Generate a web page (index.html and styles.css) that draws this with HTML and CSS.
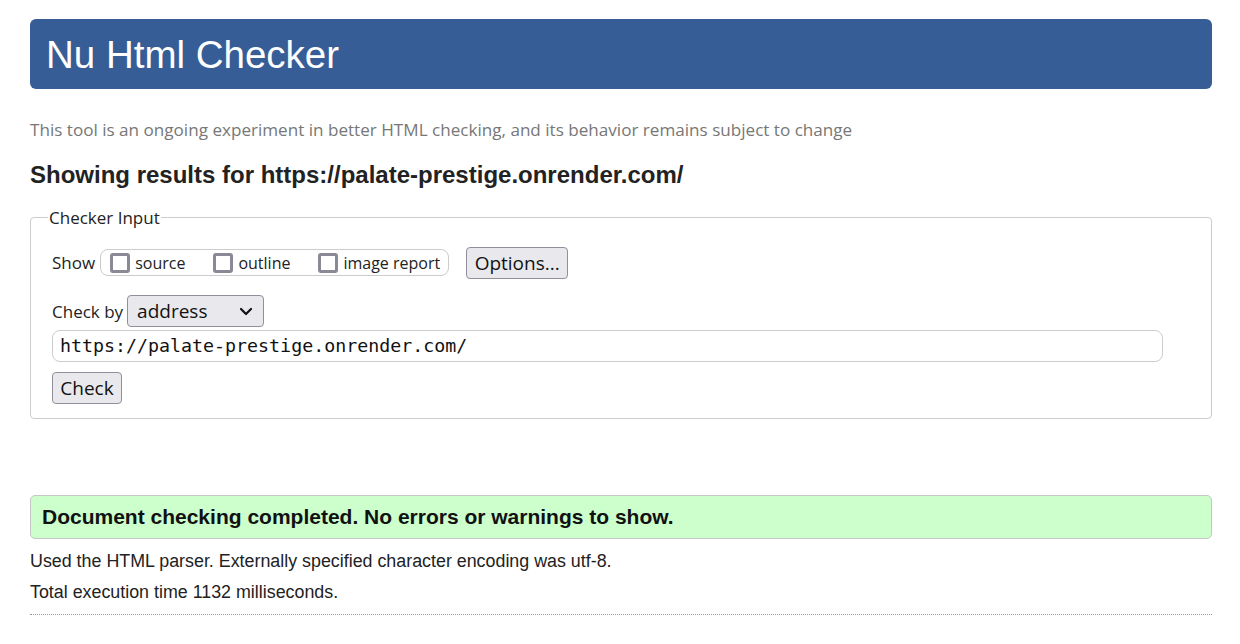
FILE: index.html
```html
<!DOCTYPE html>
<html lang="en">
<head>
<meta charset="utf-8">
<title>Nu Html Checker</title>
<link rel="stylesheet" href="styles.css">
</head>
<body>
<div class="page">
  <h1 class="banner">Nu Html Checker</h1>
  <p class="intro">This tool is an ongoing experiment in better HTML checking, and its behavior remains subject to change</p>
  <h2 class="results-title">Showing results for https://palate-prestige.onrender.com/</h2>
  <fieldset class="checker">
    <legend class="checker-legend">Checker Input</legend>
    <div class="show-row">
      <span class="label">Show</span>
      <span class="show-group">
        <label class="opt"><span class="box"></span>source</label>
        <label class="opt"><span class="box"></span>outline</label>
        <label class="opt"><span class="box"></span>image report</label>
      </span>
      <button class="btn btn-options" type="button">Options...</button>
    </div>
    <div class="by-row">
      <span class="label">Check by</span>
      <span class="select">address<svg class="chev" width="14" height="9" viewBox="0 0 14 9"><path d="M2 2 L7 7 L12 2" fill="none" stroke="#111" stroke-width="2.2" stroke-linecap="round" stroke-linejoin="round"/></svg></span>
    </div>
    <div class="url">https://palate-prestige.onrender.com/</div>
    <button class="btn btn-check" type="button">Check</button>
  </fieldset>
  <div class="success">Document checking completed. No errors or warnings to show.</div>
  <p class="info">Used the HTML parser. Externally specified character encoding was utf-8.</p>
  <p class="info">Total execution time 1132 milliseconds.</p>
  <hr class="sep">
</div>
</body>
</html>
```
FILE: styles.css
```css
html, body {
  margin: 0;
  padding: 0;
  background: #fff;
}
.page {
  margin: 0 28px 0 30px;
  padding-top: 19px;
  font-family: "Liberation Sans", Arial, sans-serif;
  color: #222;
}
.banner {
  margin: 0;
  height: 70px;
  box-sizing: border-box;
  padding: 0 0 0 16px;
  background: #365d96;
  color: #fff;
  border-radius: 6px;
  font-weight: normal;
  font-size: 38.5px;
  line-height: 72px;
}
.intro {
  margin: 29px 0 0 0;
  font-family: "Open Sans", "Noto Sans", sans-serif;
  font-size: 17.1px;
  line-height: 23px;
  color: #777;
}
.results-title {
  margin: 20px 0 0 0;
  font-size: 24px;
  line-height: 28px;
  font-weight: bold;
  color: #222;
}
.checker {
  margin: 17px 0 0 0;
  padding: 18px 20px 14px 21px;
  border: 1px solid #ccc;
  border-radius: 4px;
  font-family: "Open Sans", "Noto Sans", sans-serif;
  font-size: 16px;
  color: #222;
  min-height: 0;
}
.checker-legend {
  padding: 0 1px;
  margin-left: -4px;
  font-size: 17px;
  color: #222;
}
.show-row {
  display: flex;
  align-items: center;
  height: 31px;
}
.label {
  font-size: 17px;
  color: #222;
  margin-right: 5px;
}
.show-group {
  display: inline-flex;
  align-items: center;
  height: 27px;
  box-sizing: border-box;
  border: 1px solid #ccc;
  border-radius: 8px;
  padding: 0 8px 0 9px;
  gap: 28px;
}
.opt {
  display: inline-flex;
  align-items: center;
  font-size: 16px;
  color: #222;
}
.box {
  width: 20px;
  height: 20px;
  box-sizing: border-box;
  border: 3px solid #8a8a96;
  border-radius: 3px;
  margin-right: 5px;
  background: #fff;
}
.btn {
  font-family: "Open Sans", "Noto Sans", sans-serif;
  background: #e9e9ed;
  border: 1px solid #8f8f9d;
  border-radius: 4px;
  color: #111;
  padding: 0;
  box-sizing: border-box;
  height: 32px;
}
.btn-options {
  margin-left: 17px;
  width: 102px;
  font-size: 19px;
}
.by-row {
  display: flex;
  align-items: center;
  margin-top: 17px;
  height: 32px;
}
.select {
  display: inline-flex;
  align-items: center;
  justify-content: space-between;
  width: 137px;
  height: 32px;
  box-sizing: border-box;
  padding: 0 10px 0 9px;
  background: #e9e9ed;
  border: 1px solid #8f8f9d;
  border-radius: 4px;
  font-size: 19px;
  color: #111;
  margin-left: -1px;
}
.chev {
  display: block;
}
.url {
  margin-top: 3px;
  width: 1111px;
  height: 32px;
  box-sizing: border-box;
  border: 1px solid #ccc;
  border-radius: 8px;
  padding: 0 0 0 7px;
  font-family: "DejaVu Sans Mono", "Liberation Mono", monospace;
  font-size: 18.3px;
  line-height: 30px;
  color: #111;
}
.btn-check {
  display: block;
  margin-top: 10px;
  width: 70px;
  font-size: 19px;
}
.success {
  margin-top: 76px;
  height: 44px;
  box-sizing: border-box;
  background: #ccffcc;
  border: 1px solid #c6c6c6;
  border-radius: 5px;
  padding: 0 0 0 11px;
  font-size: 21px;
  font-weight: bold;
  line-height: 42px;
  color: #111;
}
.info {
  margin: 12px 0 0 0;
  font-size: 17.85px;
  line-height: 20px;
  color: #222;
}
.info + .info {
  margin-top: 11px;
}
.sep {
  margin: 12px 0 0 0;
  border: 0;
  border-top: 1px dotted #999;
  height: 0;
}
```
